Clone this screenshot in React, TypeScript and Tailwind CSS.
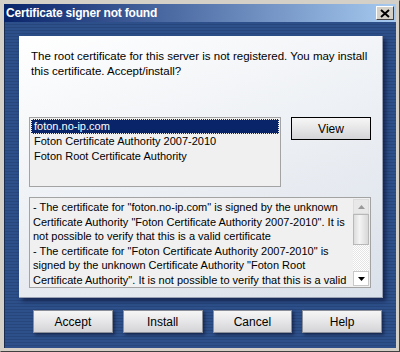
import React from "react";

const font = { fontFamily: '"Liberation Sans", Arial, sans-serif' };

function Btn({ label, def }: { label: string; def?: boolean }) {
  return (
    <div
      className={
        "flex items-center justify-center w-[80px] h-[23px] text-[12px] text-black bg-[linear-gradient(180deg,#f6f6f6_0%,#e6e6e8_50%,#d4d4d8_100%)] " +
        (def
          ? "border border-black"
          : "border border-[#8a8f9a] shadow-[2px_2px_3px_rgba(0,0,20,0.45)]")
      }
    >
      {label}
    </div>
  );
}

export default function App() {
  return (
    <div
      className="w-[400px] h-[352px] bg-[#d4d0c8] border border-t-[#d4d0c8] border-l-[#d4d0c8] border-r-[#404040] border-b-[#404040] flex flex-col p-[3px] select-none"
      style={font}
    >
      {/* title bar */}
      <div className="h-[18px] flex items-center justify-between bg-[linear-gradient(90deg,#0a246a_0%,#a6caf0_100%)] pl-[2px] pr-[2px]">
        <span className="text-white font-bold text-[12px] leading-none tracking-[-0.2px]">
          Certificate signer not found
        </span>
        <div className="w-[18px] h-[14px] bg-[#d4d0c8] border border-t-white border-l-white border-r-[#404040] border-b-[#404040] flex items-center justify-center">
          <svg width="10" height="9" viewBox="0 0 10 9">
            <path d="M1 1L9 8M9 1L1 8" stroke="#000" strokeWidth="2" />
          </svg>
        </div>
      </div>
      {/* body */}
      <div className="flex-1 flex flex-col border-l border-[#1a2c50] bg-[repeating-linear-gradient(180deg,#2d4f8a_0px,#2d4f8a_2px,#27467c_2px,#27467c_3px)] pt-[14px] pl-[14px] pr-[14px]">
        <div className="w-[364px] h-[262px] bg-[linear-gradient(160deg,#ffffff_0%,#eef1f5_45%,#dbe1ea_100%)] border-r border-b border-[#9aa3b5] shadow-[3px_3px_4px_rgba(0,0,30,0.5)] pt-[13px] pl-[10px] flex flex-col">
          <div className="pl-[2px] text-[11.5px] leading-[15px] text-black">
            The root certificate for this server is not registered. You may install
            <br />
            this certificate. Accept/install?
          </div>
          <div className="flex mt-[38px] gap-[10px]">
            <div className="w-[252px] h-[70px] border border-[#a3a3a3] bg-[#f0f0f0] p-[1px] text-[11px] leading-[15px]">
              <div className="bg-[#0a246a] text-white pl-[2px] border border-dotted border-[#f0f0f0] h-[15px] leading-[13px]">
                foton.no-ip.com
              </div>
              <div className="pl-[3px] text-black">Foton Certificate Authority 2007-2010</div>
              <div className="pl-[3px] text-black">Foton Root Certificate Authority</div>
            </div>
            <Btn label="View" def />
          </div>
          <div className="mt-[10px] w-[342px] h-[91px] border border-[#a3a3a3] bg-[#f0f0f0] flex">
            <div className="flex-1 pl-[3px] pt-[2px] text-[11px] leading-[14.6px] text-black whitespace-nowrap overflow-hidden">
              - The certificate for "foton.no-ip.com" is signed by the unknown
              <br />
              Certificate Authority "Foton Certificate Authority 2007-2010". It is
              <br />
              not possible to verify that this is a valid certificate
              <br />
              - The certificate for "Foton Certificate Authority 2007-2010" is
              <br />
              signed by the unknown Certificate Authority "Foton Root
              <br />
              Certificate Authority". It is not possible to verify that this is a valid
            </div>
            <div className="w-[16px] flex flex-col py-[1px] mr-[1px]">
              <div className="h-[15px] bg-[#e8e8e8] border border-[#dcdcdc] flex items-center justify-center">
                <svg width="7" height="4" viewBox="0 0 7 4">
                  <path d="M3.5 0L7 4H0z" fill="#9a9a9a" />
                </svg>
              </div>
              <div className="h-[31px] bg-[linear-gradient(90deg,#dcdcdc,#f4f4f4_40%,#d8d8d8)] border border-[#b8b8b8]" />
              <div className="flex-1 bg-[repeating-conic-gradient(#ffffff_0_25%,#e4e4e4_0_50%)] bg-[length:2px_2px]" />
              <div className="h-[15px] bg-white border border-[#c8c8c8] flex items-center justify-center">
                <svg width="7" height="4" viewBox="0 0 7 4">
                  <path d="M0 0h7L3.5 4z" fill="#000" />
                </svg>
              </div>
            </div>
          </div>
        </div>
        <div className="flex gap-[10px] mt-[12px] ml-[14px]">
          <Btn label="Accept" />
          <Btn label="Install" />
          <Btn label="Cancel" />
          <Btn label="Help" />
        </div>
      </div>
    </div>
  );
}
